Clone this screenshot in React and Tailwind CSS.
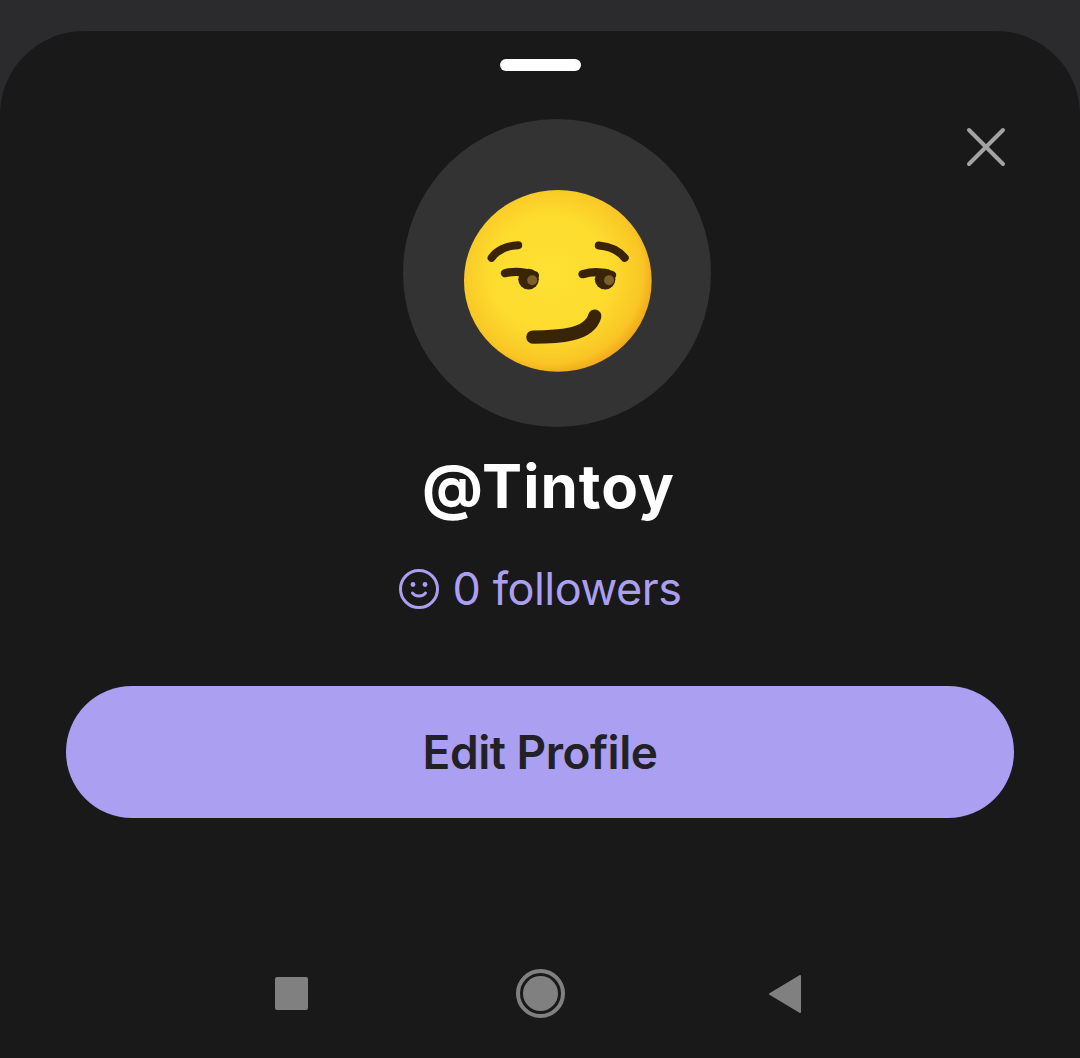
import React from 'react';

const SmirkEmoji = () => (
    <svg width="193" height="188" viewBox="180 200 580 565" fill="none">
        <defs>
            <radialGradient id="face" cx="46%" cy="46%" r="58%">
                <stop offset="0" stopColor="#fee133" />
                <stop offset="0.55" stopColor="#fddc2e" />
                <stop offset="0.85" stopColor="#f9c625" />
                <stop offset="1" stopColor="#ef9c1a" />
            </radialGradient>
        </defs>
        <ellipse cx="471" cy="482" rx="282" ry="273" fill="url(#face)" />
        <g stroke="#3a2407" strokeLinecap="round" fill="none">
            <path d="M272 413C287 391 317 376 352 375" strokeWidth="24" />
            <path d="M594 376C628 379 655 392 672 413" strokeWidth="24" />
            <path d="M312 459C338 453 368 453 402 466" strokeWidth="25" />
            <path d="M545 462C572 454 602 452 634 465" strokeWidth="25" />
            <path d="M396 651C470 651 565 648 582 588" strokeWidth="40" />
        </g>
        <circle cx="383" cy="477" r="31" fill="#3a2407" />
        <circle cx="613" cy="477" r="31" fill="#3a2407" />
        <circle cx="394" cy="480" r="15" fill="#7a6128" />
        <circle cx="625" cy="480" r="15" fill="#7a6128" />
    </svg>
);

const SmileIcon = () => (
    <svg width="40" height="40" viewBox="0 0 40 40" fill="none" stroke="#ab9ff2" strokeWidth="3" strokeLinecap="round">
        <circle cx="20" cy="20" r="18.5" />
        <path d="M13.5 24C16 28 24 28 26.5 24" />
        <circle cx="14" cy="15.5" r="2.4" fill="#ab9ff2" stroke="none" />
        <circle cx="26" cy="15.5" r="2.4" fill="#ab9ff2" stroke="none" />
    </svg>
);

const App = () => (
    <div className="h-[1058px] w-[1080px] overflow-hidden bg-[#2b2b2e] pt-[31px] font-['Inter',sans-serif]">
        <div className="relative flex h-[1027px] flex-col items-center rounded-t-[84px] bg-[#191919]">
            <div className="mt-[28px] h-[12px] w-[81px] rounded-full bg-white" />

            <svg className="absolute right-[73px] top-[95px]" width="42" height="42" viewBox="0 0 42 42" stroke="#a3a3a3" strokeWidth="4" strokeLinecap="round">
                <path d="M4 4L38 38M38 4L4 38" />
            </svg>

            <div className="ml-[34px] mt-[48px] flex h-[308px] w-[308px] items-center justify-center rounded-full bg-[#333333] pt-[15px]">
                <SmirkEmoji />
            </div>

            <h1 className="ml-[17px] mt-[19px] text-[60px] font-bold leading-[80px] tracking-[1px] text-white">@Tintoy</h1>

            <div className="mt-[33px] flex items-center gap-[14px] text-[#ab9ff2]">
                <SmileIcon />
                <span className="text-[45px] leading-[60px] tracking-[-0.5px]">0 followers</span>
            </div>

            <button className="mt-[67px] flex h-[132px] w-[948px] items-center justify-center rounded-full bg-[#ab9ff2] text-[46px] font-semibold tracking-[-0.5px] text-[#222126]">
                Edit Profile
            </button>

            <div className="mt-[151px] flex w-full items-center pl-[275px]">
                <div className="h-[33px] w-[33px] rounded-[2px] bg-[#808080]" />
                <div className="ml-[208px] flex h-[49px] w-[49px] items-center justify-center rounded-full border-[4px] border-[#808080]">
                    <div className="h-[35px] w-[35px] rounded-full bg-[#808080]" />
                </div>
                <svg className="ml-[203px]" width="33" height="38" viewBox="0 0 33 38" fill="#808080" stroke="#808080" strokeWidth="2" strokeLinejoin="round">
                    <path d="M2 19L32 1V37Z" />
                </svg>
            </div>
        </div>
    </div>
);

export default App;
